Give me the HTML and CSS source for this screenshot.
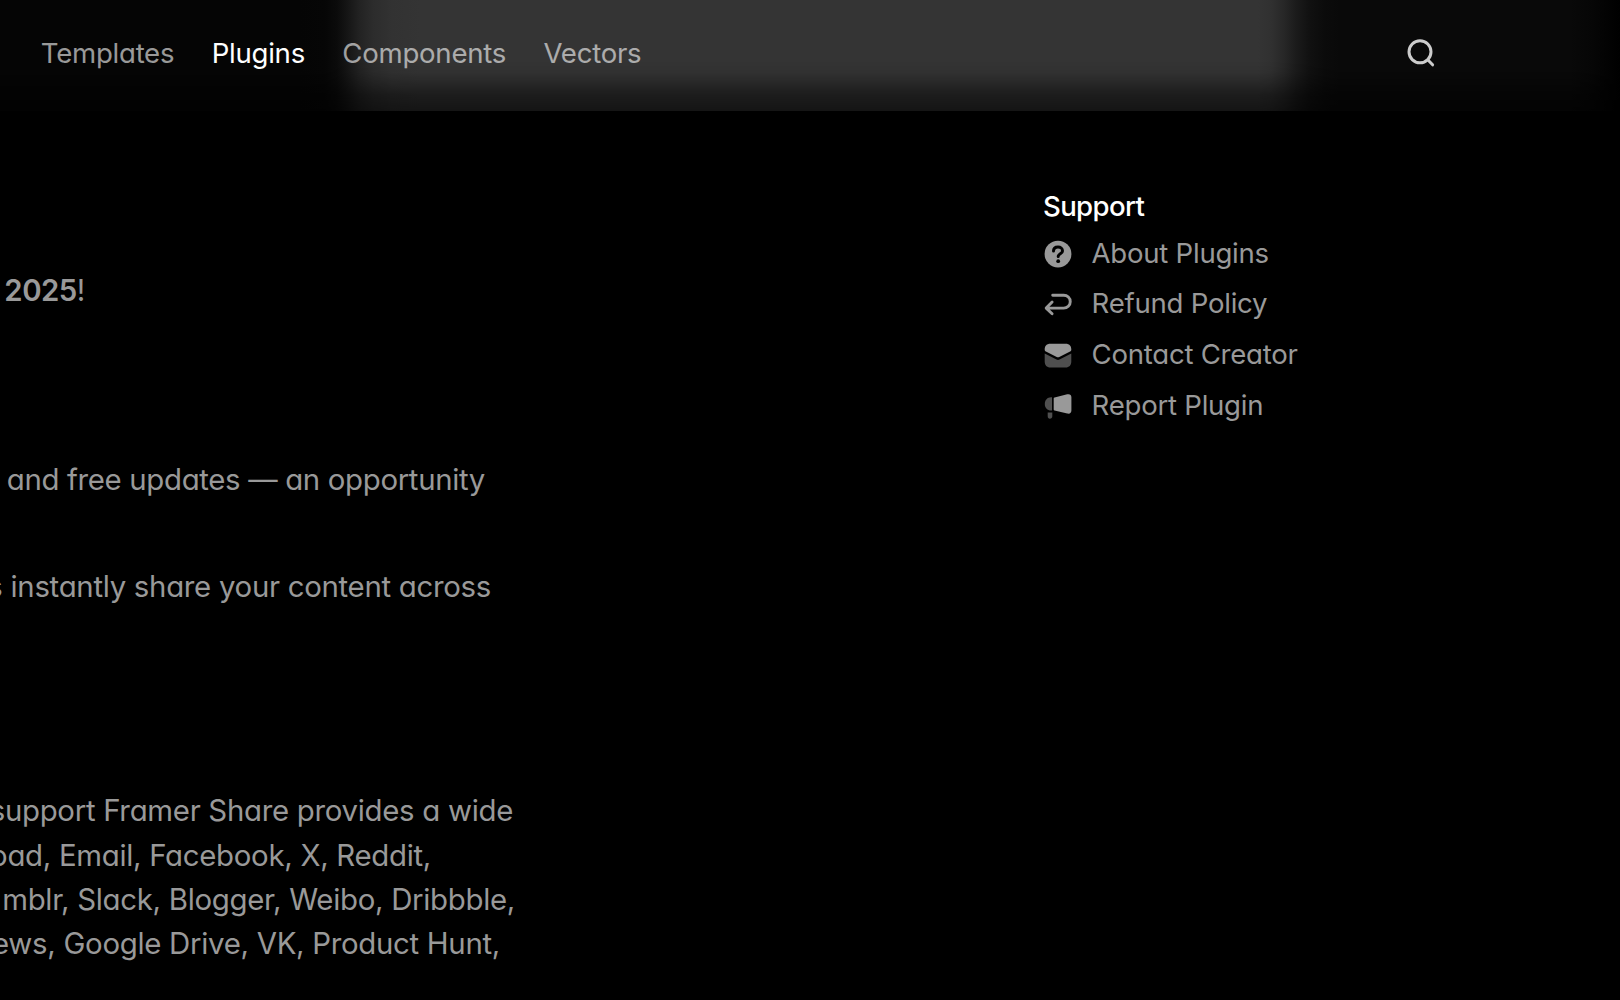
FILE: index.html
```html
<!DOCTYPE html>
<html lang="en">
<head>
<meta charset="utf-8">
<title>Plugins</title>
<link rel="stylesheet" href="styles.css">
</head>
<body>
<header class="topbar">
  <div class="glow"></div>
  <nav class="nav">
    <a class="nav-link">Templates</a>
    <a class="nav-link active">Plugins</a>
    <a class="nav-link">Components</a>
    <a class="nav-link">Vectors</a>
  </nav>
  <svg class="search" viewBox="0 0 32 32" fill="none" stroke="#ccc" stroke-width="3" stroke-linecap="round">
    <circle cx="15" cy="14.8" r="11"/>
    <path d="M23 23L27.6 27.8"/>
  </svg>
</header>
<main class="page">
  <article class="article">
    <p class="intro"><span class="line"><strong>2025</strong>!</span></p>
    <p class="updates"><span class="line">and free updates — an opportunity</span></p>
    <p class="share"><span class="line">s instantly share your content across</span></p>
    <p class="platforms">
      <span class="line line-a">support Framer Share provides a wide</span>
      <span class="line line-b">oad, Email, Facebook, X, Reddit,</span>
      <span class="line line-c">mblr, Slack, Blogger, Weibo, Dribbble,</span>
      <span class="line line-d">ews, Google Drive, VK, Product Hunt,</span>
    </p>
  </article>
  <aside class="support">
    <h2 class="support-title">Support</h2>
    <ul class="support-list">
      <li class="item">
        <svg class="icon" viewBox="0 0 30 30"><circle cx="15" cy="16.1" r="13.4" fill="#999"/><path d="M10.5 13.1C10.5 10.5 12.4 9 15 9S19.5 10.6 19.5 12.9C19.5 15.9 15.2 15.7 15.2 18.6" fill="none" stroke="#000" stroke-width="3" stroke-linecap="round"/><circle cx="15.2" cy="23.2" r="1.9" fill="#000"/></svg>
        <span>About Plugins</span>
      </li>
      <li class="item">
        <svg class="icon" viewBox="0 0 30 30" fill="none" stroke="#999" stroke-width="2.9" stroke-linecap="round" stroke-linejoin="round"><path d="M9.7 7.2H20.7A6.4 6.3 0 0 1 20.7 20.1H3.3M9.1 14.1L3.2 20.1L9.1 25.8"/></svg>
        <span>Refund Policy</span>
      </li>
      <li class="item">
        <svg class="icon" viewBox="0 0 30 30"><path d="M1.7 10.4C1.7 6.8 3.9 4.7 7.2 4.7H22.8C26.1 4.7 28.3 6.8 28.3 10.4C28.3 11.4 27.9 12 27.1 12.5L16.3 17.9Q15 18.6 13.7 17.9L2.9 12.5C2.1 12 1.7 11.4 1.7 10.4Z" fill="#999"/><path d="M1.7 14.5L13.5 20.5Q15 21.3 16.5 20.5L28.3 14.5V22.6C28.3 26.4 26.2 28.6 22.6 28.6H7.4C3.8 28.6 1.7 26.4 1.7 22.6Z" fill="#4f4f4f"/></svg>
        <span>Contact Creator</span>
      </li>
      <li class="item">
        <svg class="icon" viewBox="0 0 30 30"><path d="M10.7 8.6Q10.7 7.8 11.6 7.6L24.2 4.3C26.8 3.7 28.4 4.8 28.4 7.3V20.6C28.4 23.1 26.8 24.2 24.2 23.6L11.6 20.5Q10.7 20.3 10.7 19.5Z" fill="#999"/><path d="M9 7.3V20.6H8C4.4 20.6 1.8 17.9 1.8 14S4.4 7.3 8 7.3Z" fill="#4f4f4f"/><path d="M4.7 22.4H9.3V26C9.3 27.8 8.4 28.8 6.9 28.8S4.7 27.8 4.7 26Z" fill="#4f4f4f"/></svg>
        <span>Report Plugin</span>
      </li>
    </ul>
  </aside>
</main>
</body>
</html>
```
FILE: styles.css
```css
* {
  box-sizing: border-box;
}

body {
  margin: 0;
  height: 1000px;
  overflow: hidden;
  background: #000;
  color: #999;
  font-family: Inter, "Liberation Sans", sans-serif;
  font-feature-settings: "cv11";
  letter-spacing: -0.26px;
}

p,
h2,
ul {
  margin: 0;
  padding: 0;
}

.topbar {
  position: relative;
  display: flex;
  align-items: center;
  justify-content: space-between;
  height: 111px;
  padding: 0 183px 6px 40.8px;
}

.glow {
  position: absolute;
  inset: 0;
  background: linear-gradient(to right,
    #050505 0, #050505 300px, #060606 325px, #0b0b0b 337px, #161616 348px,
    #232323 360px, #2c2c2c 373px, #323232 392px, #343434 420px,
    #343434 1258px, #303030 1272px, #272727 1284px, #1b1b1b 1296px,
    #111 1309px, #0b0b0b 1325px, #090909 1340px, #090909 1570px,
    #060606 1593px, #000 1620px);
  -webkit-mask-image: linear-gradient(#000 0, #000 60px, rgba(0,0,0,.94) 72px, rgba(0,0,0,.78) 82px, rgba(0,0,0,.54) 95px, rgba(0,0,0,.4) 111px);
  mask-image: linear-gradient(#000 0, #000 60px, rgba(0,0,0,.94) 72px, rgba(0,0,0,.78) 82px, rgba(0,0,0,.54) 95px, rgba(0,0,0,.4) 111px);
}

.nav {
  position: relative;
  display: flex;
  gap: 37.4px;
  font-size: 27.6px;
  line-height: 34px;
}

.nav-link {
  color: rgba(255, 255, 255, 0.6);
}

.nav-link.active {
  color: #fff;
}

.search {
  position: relative;
  width: 32px;
  height: 32px;
}

.page {
  display: flex;
  justify-content: space-between;
}

.article {
  display: flex;
  flex-direction: column;
  width: 515px;
  padding-top: 158px;
  overflow: hidden;
  font-size: 29.4px;
  line-height: 44.1px;
  letter-spacing: -0.3px;
}

.article strong {
  font-weight: 600;
  letter-spacing: -0.5px;
}

.line {
  display: flex;
  justify-content: flex-end;
  white-space: nowrap;
}

.intro {
  padding-right: 430px;
}

.updates {
  padding: 144.5px 30px 0 0;
  letter-spacing: -0.34px;
}

.share {
  padding: 63.3px 24px 0 0;
}

.platforms {
  padding-top: 180.4px;
}

.line-a {
  padding-right: 2px;
}

.line-b {
  padding-right: 84px;
}

.line-d {
  padding-right: 15px;
}

.support {
  width: 577px;
  padding-top: 78px;
  font-size: 27.6px;
}

.support-title {
  color: #fff;
  font-size: 27.6px;
  font-weight: 500;
  line-height: 34px;
  letter-spacing: -0.65px;
}

.support-list {
  padding-top: 4.4px;
  list-style: none;
}

.item {
  display: flex;
  align-items: center;
  gap: 18.6px;
  height: 50.7px;
}

.icon {
  width: 30px;
  height: 30px;
}
```
